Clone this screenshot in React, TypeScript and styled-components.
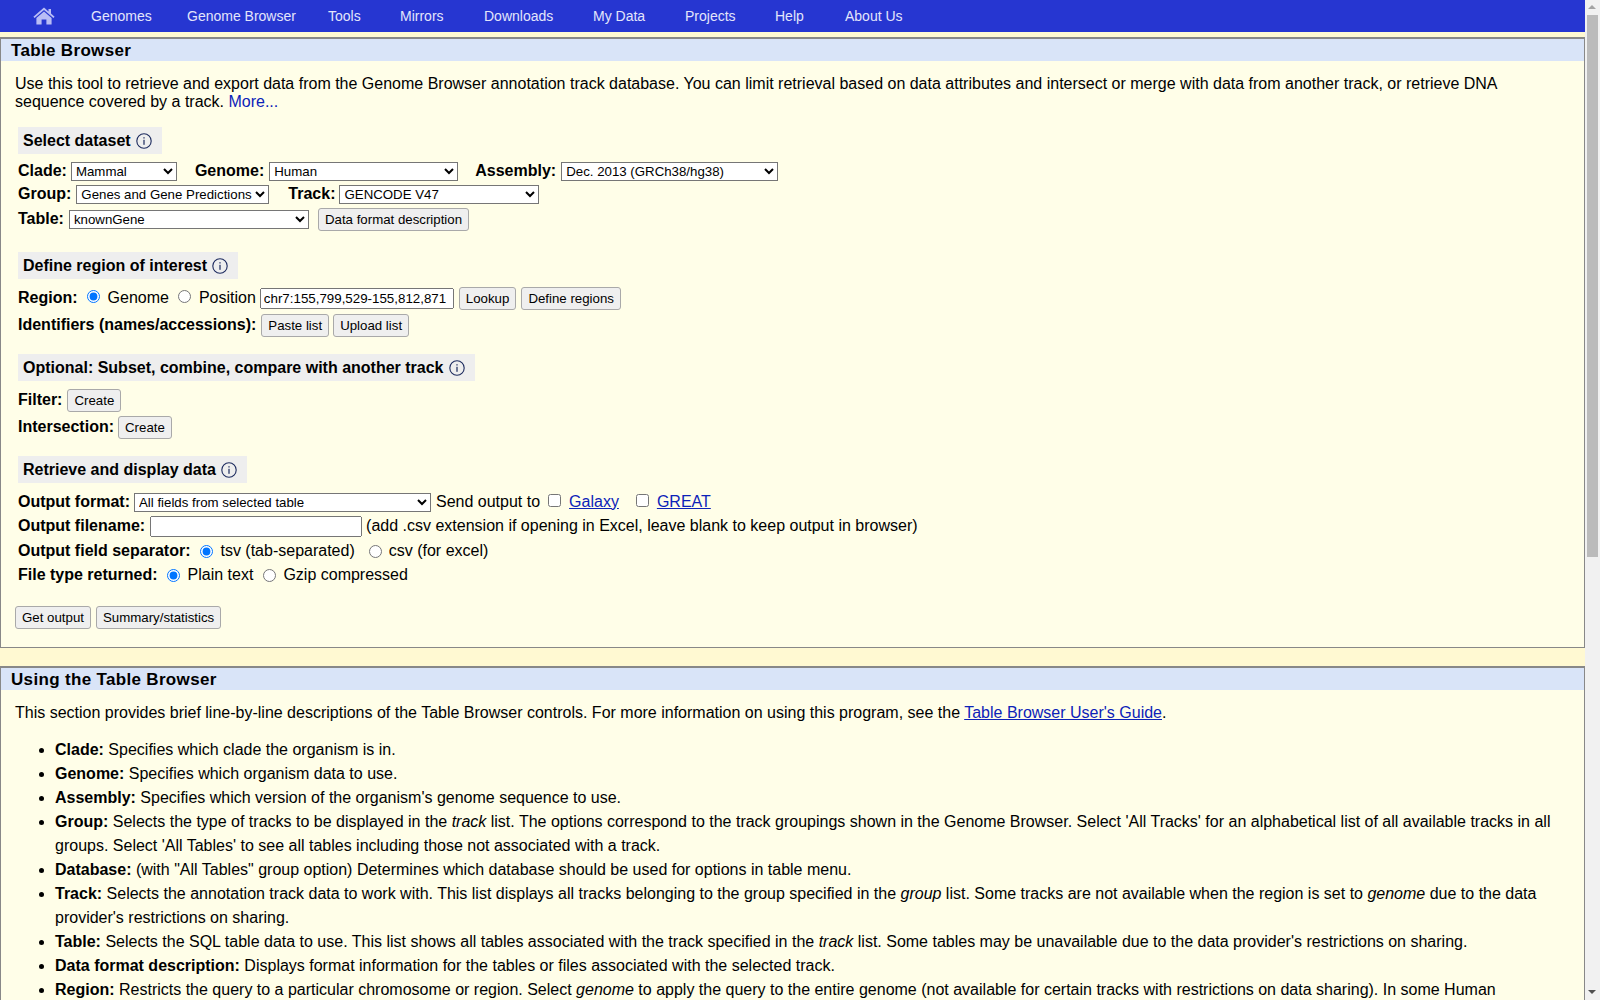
import React from 'react';
import styled, { createGlobalStyle } from 'styled-components';

const GlobalStyle = createGlobalStyle`
  html, body {
    margin: 0;
    height: 100%;
    overflow: hidden;
  }
  body {
    background: #fff9d2;
    color: #000;
    font-family: "Liberation Sans", Arial, sans-serif;
    font-size: 16px;
  }
`

const NAV_ITEMS: [string, number][] = [
  ['Genomes', 96],
  ['Genome Browser', 141],
  ['Tools', 72],
  ['Mirrors', 84],
  ['Downloads', 109],
  ['My Data', 92],
  ['Projects', 90],
  ['Help', 70],
  ['About Us', 80],
]

const HomeIcon = () => (
  <svg width="22" height="18" viewBox="0 0 22 18">
    <path d="M11 0.5 L15.5 4.4 V2 H18 V6.6 L21.6 9.7 L20.4 11 L11 3 L1.6 11 L0.4 9.7 Z" fill="#b9bdf5" />
    <path d="M11 4.6 L18.6 11 V17.6 H13.4 V12.4 H8.6 V17.6 H3.4 V11 Z" fill="#b9bdf5" />
  </svg>
)

const InfoIcon = () => (
  <InfoSvg width="16" height="16" viewBox="0 0 16 16">
    <circle cx="8" cy="8" r="7.2" fill="none" stroke="#1c2a5e" strokeWidth="1.1" />
    <rect x="7.4" y="6.8" width="1.2" height="5" fill="#1c2a5e" />
    <rect x="7.4" y="4.2" width="1.2" height="1.3" fill="#1c2a5e" />
  </InfoSvg>
)

const App: React.FC = () => {
  return (
    <Screen>
      <GlobalStyle />
      <Page>
        <NavBar>
          <HomeLink><HomeIcon /></HomeLink>
          {NAV_ITEMS.map(([label, w]) => (
            <NavItem key={label} $w={w}>{label}</NavItem>
          ))}
        </NavBar>

        <Panel $mt={5}>
          <PanelTitle>Table Browser</PanelTitle>
          <PanelBody>
            <Intro>
              Use this tool to retrieve and export data from the Genome Browser annotation track database. You can limit retrieval based on data attributes and intersect or merge with data from another track, or retrieve DNA sequence covered by a track. <PlainLink>More...</PlainLink>
            </Intro>

            <SectionTitle $mt={16}>Select dataset <InfoIcon /></SectionTitle>
            <Row $mt={8} $h={19}>
              <Label>Clade:</Label>
              <Select $ml={4} $w={106}><option>Mammal</option></Select>
              <Label $ml={18}>Genome:</Label>
              <Select $ml={5} $w={189}><option>Human</option></Select>
              <Label $ml={17}>Assembly:</Label>
              <Select $ml={5} $w={217}><option>Dec. 2013 (GRCh38/hg38)</option></Select>
            </Row>
            <Row $mt={4} $h={19}>
              <Label>Group:</Label>
              <Select $ml={5} $w={193}><option>Genes and Gene Predictions</option></Select>
              <Label $ml={19}>Track:</Label>
              <Select $ml={4} $w={200}><option>GENCODE V47</option></Select>
            </Row>
            <Row $mt={4} $h={23}>
              <Label>Table:</Label>
              <Select $ml={5} $w={240}><option>knownGene</option></Select>
              <Button $ml={9}>Data format description</Button>
            </Row>

            <SectionTitle $mt={21}>Define region of interest <InfoIcon /></SectionTitle>
            <Row $mt={9} $h={21}>
              <Label>Region:</Label>
              <Radio $ml={9} name="region" defaultChecked />
              <Text $ml={8}>Genome</Text>
              <Radio $ml={9} name="region" />
              <Text $ml={8}>Position</Text>
              <TextInput $ml={4} $w={194} defaultValue="chr7:155,799,529-155,812,871" />
              <Button $ml={5}>Lookup</Button>
              <Button $ml={5}>Define regions</Button>
            </Row>
            <Row $mt={5} $h={23}>
              <Label>Identifiers (names/accessions):</Label>
              <Button $ml={5}>Paste list</Button>
              <Button $ml={4}>Upload list</Button>
            </Row>

            <SectionTitle $mt={17}>Optional: Subset, combine, compare with another track <InfoIcon /></SectionTitle>
            <Row $mt={8} $h={23}>
              <Label>Filter:</Label>
              <Button $ml={5}>Create</Button>
            </Row>
            <Row $mt={4} $h={23}>
              <Label>Intersection:</Label>
              <Button $ml={4}>Create</Button>
            </Row>

            <SectionTitle $mt={17}>Retrieve and display data <InfoIcon /></SectionTitle>
            <Row $mt={10} $h={19}>
              <Label>Output format:</Label>
              <Select $ml={4} $w={297}><option>All fields from selected table</option></Select>
              <Text $ml={5}>Send output to</Text>
              <Checkbox $ml={8} />
              <BlueLink $ml={8}>Galaxy</BlueLink>
              <Checkbox $ml={17} />
              <BlueLink $ml={8}>GREAT</BlueLink>
            </Row>
            <Row $mt={4} $h={21}>
              <Label>Output filename:</Label>
              <TextInput $ml={5} $w={212} />
              <Text $ml={4}>(add .csv extension if opening in Excel, leave blank to keep output in browser)</Text>
            </Row>
            <Row $mt={3} $h={22} $level>
              <Label>Output field separator:</Label>
              <Radio $ml={10} name="sep" defaultChecked />
              <Text $ml={7}>tsv (tab-separated)</Text>
              <Radio $ml={14} name="sep" />
              <Text $ml={7}>csv (for excel)</Text>
            </Row>
            <Row $mt={2} $h={22} $level>
              <Label>File type returned:</Label>
              <Radio $ml={9} name="gzip" defaultChecked />
              <Text $ml={8}>Plain text</Text>
              <Radio $ml={10} name="gzip" />
              <Text $ml={7}>Gzip compressed</Text>
            </Row>
            <SubmitRow>
              <Button>Get output</Button>
              <Button $ml={5}>Summary/statistics</Button>
            </SubmitRow>
          </PanelBody>
        </Panel>

        <Panel $mt={18}>
          <PanelTitle>Using the Table Browser</PanelTitle>
          <PanelBody>
            <Intro>
              This section provides brief line-by-line descriptions of the Table Browser controls. For more information on using this program, see the <BlueLink>Table Browser User's Guide</BlueLink>.
            </Intro>
            <HelpList>
              <li><b>Clade:</b> Specifies which clade the organism is in.</li>
              <li><b>Genome:</b> Specifies which organism data to use.</li>
              <li><b>Assembly:</b> Specifies which version of the organism's genome sequence to use.</li>
              <li><b>Group:</b> Selects the type of tracks to be displayed in the <i>track</i> list. The options correspond to the track groupings shown in the Genome Browser. Select 'All Tracks' for an alphabetical list of all available tracks in all groups. Select 'All Tables' to see all tables including those not associated with a track.</li>
              <li><b>Database:</b> (with "All Tables" group option) Determines which database should be used for options in table menu.</li>
              <li><b>Track:</b> Selects the annotation track data to work with. This list displays all tracks belonging to the group specified in the <i>group</i> list. Some tracks are not available when the region is set to <i>genome</i> due to the data provider's restrictions on sharing.</li>
              <li><b>Table:</b> Selects the SQL table data to use. This list shows all tables associated with the track specified in the <i>track</i> list. Some tables may be unavailable due to the data provider's restrictions on sharing.</li>
              <li><b>Data format description:</b> Displays format information for the tables or files associated with the selected track.</li>
              <li><b>Region:</b> Restricts the query to a particular chromosome or region. Select <i>genome</i> to apply the query to the entire genome (not available for certain tracks with restrictions on data sharing). In some Human</li>
            </HelpList>
          </PanelBody>
        </Panel>
      </Page>

      <Scrollbar>
        <ScrollArrow $up />
        <ScrollThumb />
        <ScrollTrackRest />
        <ScrollArrow />
      </Scrollbar>
    </Screen>
  )
}

const Screen = styled.div`
  display: flex;
  height: 100vh;
  overflow: hidden;
`

const Page = styled.div`
  flex: 1;
  min-width: 0;
  height: 100%;
  overflow: hidden;
`

const NavBar = styled.div`
  display: flex;
  align-items: center;
  height: 32px;
  background: #2636d1;
`

const HomeLink = styled.a`
  display: flex;
  flex: none;
  width: 22px;
  margin: 0 36px 0 33px;
`

const NavItem = styled.a<{ $w: number }>`
  flex: none;
  width: ${props => props.$w}px;
  color: #e3e5fb;
  font-size: 14px;
  line-height: 32px;
  white-space: nowrap;
`

const Panel = styled.div<{ $mt: number }>`
  margin-top: ${props => props.$mt}px;
  border: 1px solid #888;
  border-top-width: 2px;
  background: #fffee8;
`

const PanelTitle = styled.div`
  background: #d9e4f8;
  height: 22px;
  padding-left: 10px;
  font-size: 17px;
  font-weight: 700;
  line-height: 23px;
  letter-spacing: 0.33px;
`

const PanelBody = styled.div`
  padding: 14px 14px 18px;
`

const Intro = styled.div`
  line-height: 18px;
`

const PlainLink = styled.a`
  color: #0c22b8;
`

const BlueLink = styled.a<{ $ml?: number }>`
  margin-left: ${props => props.$ml || 0}px;
  color: #0c22b8;
  text-decoration: underline;
`

const SectionTitle = styled.div<{ $mt: number }>`
  display: flex;
  align-items: center;
  gap: 5px;
  width: fit-content;
  height: 27px;
  margin: ${props => props.$mt}px 0 0 3px;
  padding: 0 10px 0 5px;
  background: #eeeeee;
  font-weight: 700;
`

const InfoSvg = styled.svg`
  flex: none;
`

const Label = styled.span<{ $ml?: number }>`
  margin-left: ${props => props.$ml || 0}px;
  font-weight: 700;
`

const Text = styled.span<{ $ml?: number }>`
  margin-left: ${props => props.$ml || 0}px;
`

// text and radios sit a little above the centre of the controls, except in $level rows
const Row = styled.div<{ $mt: number; $h: number; $level?: boolean }>`
  display: flex;
  align-items: center;
  height: ${props => props.$h}px;
  margin: ${props => props.$mt}px 0 0 3px;
  white-space: nowrap;

  > span,
  > a {
    padding-bottom: ${props => props.$level ? 0 : 2}px;
  }

  > input[type='radio'],
  > input[type='checkbox'] {
    margin-bottom: ${props => props.$level ? 0 : 4}px;
  }
`

const Select = styled.select<{ $ml?: number; $w: number }>`
  box-sizing: border-box;
  width: ${props => props.$w}px;
  height: 19px;
  margin: 0 0 0 ${props => props.$ml || 0}px;
  font-family: "Liberation Sans", Arial, sans-serif;
  font-size: 13.27px;
  background: #fff;
`

const Button = styled.button<{ $ml?: number }>`
  height: 23px;
  margin: 0 0 0 ${props => props.$ml || 0}px;
  border: 1px solid #a9a9a9;
  border-radius: 3px;
  background: #efefef;
  color: #000;
  font-family: "Liberation Sans", Arial, sans-serif;
  font-size: 13.27px;
`

const TextInput = styled.input.attrs({ type: 'text' })<{ $ml?: number; $w: number }>`
  box-sizing: border-box;
  width: ${props => props.$w}px;
  height: 21px;
  margin: 0 0 0 ${props => props.$ml || 0}px;
  font-family: "Liberation Sans", Arial, sans-serif;
  font-size: 13.33px;
`

const Radio = styled.input.attrs({ type: 'radio' })<{ $ml?: number }>`
  margin: 0 0 0 ${props => props.$ml || 0}px;
`

const Checkbox = styled.input.attrs({ type: 'checkbox' })<{ $ml?: number }>`
  margin: 0 0 0 ${props => props.$ml || 0}px;
`

const SubmitRow = styled.div`
  display: flex;
  margin-top: 20px;
`

const HelpList = styled.ul`
  margin: 16px 0 0;
  padding-left: 40px;
  line-height: 24px;
`

const Scrollbar = styled.div`
  display: flex;
  flex-direction: column;
  flex: none;
  width: 15px;
  height: 100%;
  background: #f1f1f1;
`

const ScrollArrow = styled.div<{ $up?: boolean }>`
  flex: none;
  height: 15px;
  position: relative;

  &::after {
    content: '';
    position: absolute;
    left: 3px;
    top: 5px;
    border-left: 4px solid transparent;
    border-right: 4px solid transparent;
    ${props => props.$up ? 'border-bottom: 4px solid #a3a3a3;' : 'border-top: 4px solid #505050;'}
  }
`

const ScrollThumb = styled.div`
  flex: none;
  height: 542px;
  margin: 0 2px;
  background: #bbbbbb;
`

const ScrollTrackRest = styled.div`
  flex: 1;
`

export default App
